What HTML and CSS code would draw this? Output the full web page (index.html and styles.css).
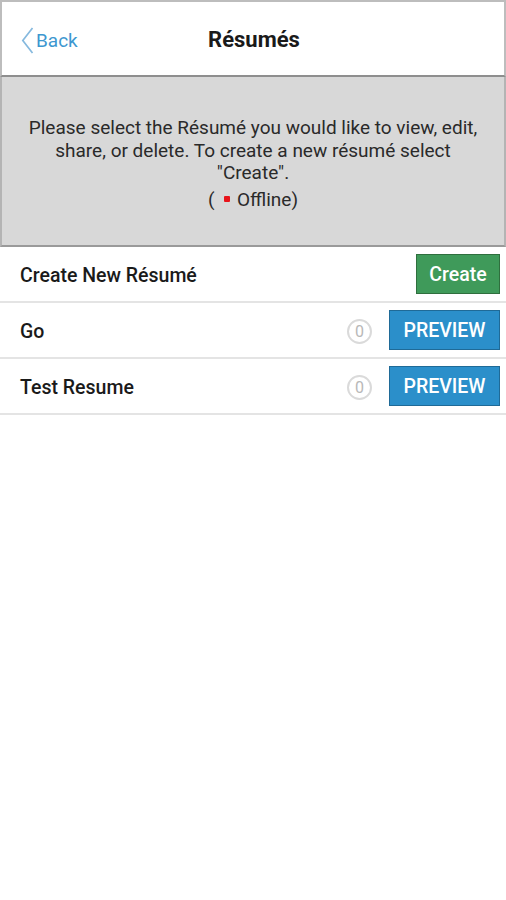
FILE: index.html
```html
<!DOCTYPE html>
<html>
<head>
<meta charset="utf-8">
<link rel="stylesheet" href="styles.css">
</head>
<body>
<div class="app">
  <header class="topbar">
    <a class="back">
      <svg class="chev" width="13" height="27" viewBox="0 0 13 27"><path d="M11.5 1 L1.8 13.5 L11.5 26" fill="none" stroke="#86b9de" stroke-width="1.7"/></svg>
      <span>Back</span>
    </a>
    <h1 class="title">Résumés</h1>
  </header>
  <section class="info">
    <p class="msg">Please select the Résumé you would like to view, edit, share, or delete. To create a new résumé select "Create".</p>
    <p class="status">( <span class="dot"></span> Offline)</p>
  </section>
  <ul class="list">
    <li class="row">
      <span class="name">Create New Résumé</span>
      <button class="btn create">Create</button>
    </li>
    <li class="row">
      <span class="name">Go</span>
      <span class="count">0</span>
      <button class="btn preview">PREVIEW</button>
    </li>
    <li class="row">
      <span class="name">Test Resume</span>
      <span class="count">0</span>
      <button class="btn preview">PREVIEW</button>
    </li>
  </ul>
</div>
</body>
</html>
```

FILE: styles.css
```css
html, body {
  margin: 0;
  padding: 0;
  background: #fff;
  font-family: Roboto, "Noto Sans", sans-serif;
}
.app {
  width: 506px;
  min-height: 900px;
}
.topbar {
  height: 73px;
  border: 2px solid #bdbdbd;
  border-bottom: 2px solid #8e8e8e;
  display: flex;
  align-items: center;
  justify-content: center;
  position: relative;
  background: #fff;
  padding-top: 2px;
  box-sizing: content-box;
  height: 71px;
}
.back {
  position: absolute;
  left: 19px;
  top: 25px;
  display: flex;
  align-items: center;
  gap: 2px;
  color: #3d97d0;
  font-size: 19px;
}
.title {
  margin: 0 0 0 2px;
  font-size: 22px;
  font-weight: 700;
  color: #1a1a1a;
}
.info {
  height: 168px;
  background: #d8d8d8;
  border-left: 2px solid #b4b4b4;
  border-right: 2px solid #b4b4b4;
  border-bottom: 2px solid #9a9a9a;
  display: flex;
  flex-direction: column;
  justify-content: center;
  align-items: center;
  text-align: center;
  color: #2a2a2a;
  font-size: 19px;
  line-height: 22.5px;
}
.msg {
  margin: 6px 18px 0;
}
.status {
  margin: 4px 0 0;
}
.dot {
  display: inline-block;
  width: 6px;
  height: 6px;
  background: #e8141b;
  border-radius: 1px;
  vertical-align: middle;
  margin: -2px 2px 0 5px;
}
.list {
  list-style: none;
  margin: 0;
  padding: 0;
}
.row {
  height: 54px;
  display: flex;
  align-items: center;
  border-bottom: 2px solid #e4e4e4;
  padding: 0 6px 0 20px;
}
.name {
  flex: 1;
  font-size: 19.5px;
  font-weight: 500;
  color: #1a1a1a;
  padding-top: 3px;
}
.count {
  width: 21px;
  height: 21px;
  border: 2px solid #dadada;
  border-radius: 50%;
  color: #b8b8b8;
  font-size: 16px;
  line-height: 21px;
  text-align: center;
  margin-right: 17px;
  margin-top: 2px;
}
.btn {
  height: 40px;
  border: none;
  font-family: Roboto, "Noto Sans", sans-serif;
  font-size: 19.5px;
  font-weight: 500;
  color: #fff;
  padding: 0;
}
.create {
  width: 84px;
  background: #3f9a5a;
  border: 1px solid #2f6f3e;
}
.preview {
  width: 111px;
  background: #2b8fca;
  border: 1px solid #1f6a97;
}
```
